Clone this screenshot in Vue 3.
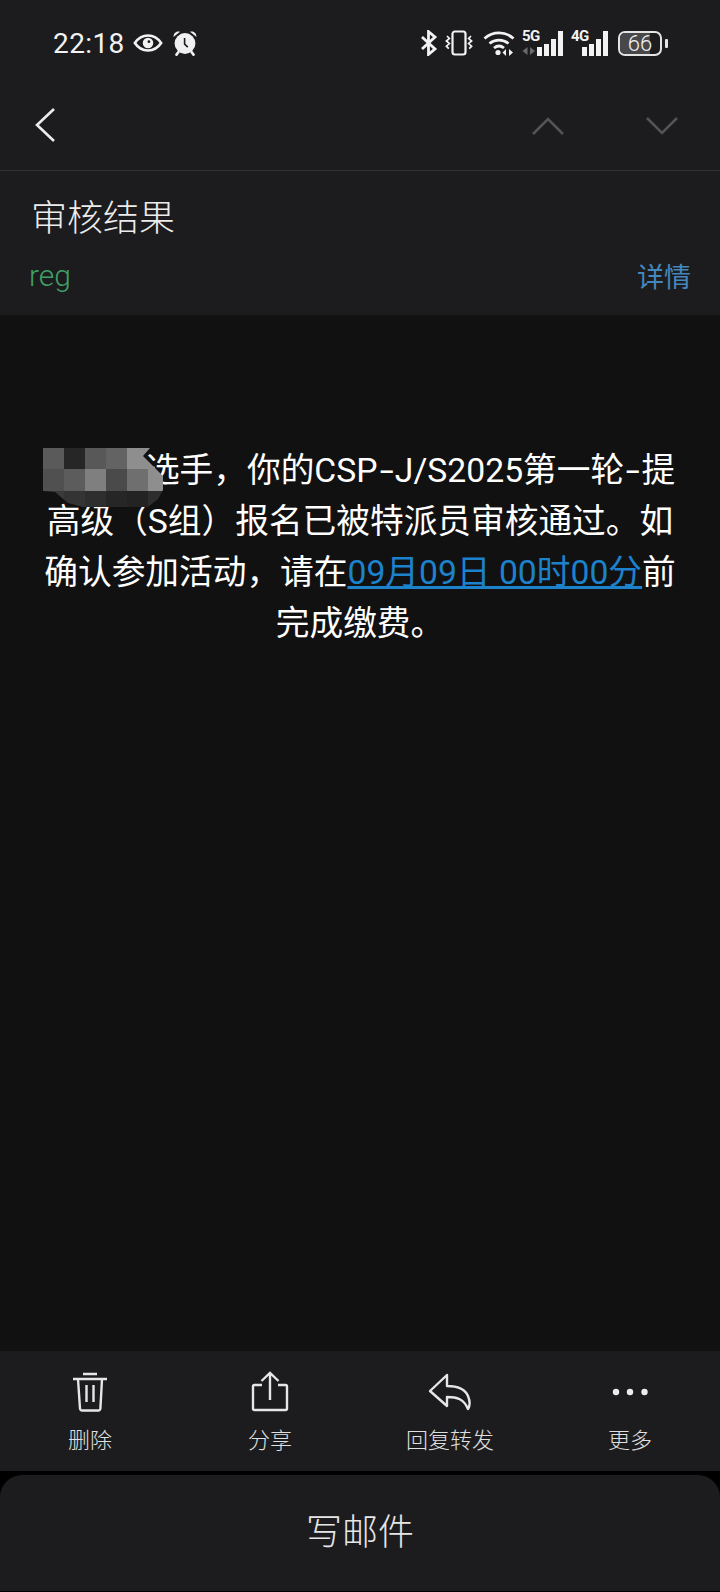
<template>
  <div class="screen">
    <header class="top">
      <div class="status">
        <div class="status-left">
          <span class="time">22:18</span>
          <svg width="30" height="20" viewBox="0 0 32 20" class="eye">
            <path d="M2 10C6 4 11 2 16 2s10 2 14 8c-4 6-9 8-14 8S6 16 2 10z" fill="none" stroke="#f2f2f2" stroke-width="2.8" />
            <circle cx="16" cy="10" r="5.6" fill="#f2f2f2" />
            <circle cx="17" cy="8.6" r="1.5" fill="#1c1c1e" />
          </svg>
          <svg width="26" height="26" viewBox="0 0 26 26" class="alarm">
            <circle cx="13" cy="13.5" r="10.4" fill="#f0f0f2" />
            <path d="M1.5 7C1.5 3 4.500 .5 8 1.800zM24.500 7c0-4-3-6.500-6.500-5.200z" fill="#f0f0f2" />
            <path d="M6.500 22l-2 2.600M19.500 22l2 2.600" stroke="#f0f0f2" stroke-width="2.600" stroke-linecap="round" />
            <path d="M12.600 8v6.200l3.200 3" fill="none" stroke="#1c1c1e" stroke-width="1.600" />
          </svg>
        </div>
        <div class="status-right">
          <svg width="18" height="26" viewBox="0 0 18 26" class="bt">
            <path d="M2 7l13 12-6.500 5.400V1.600L15 7 2 19" fill="none" stroke="#f2f2f2" stroke-width="2.800" />
          </svg>
          <svg width="30" height="26" viewBox="0 0 30 26" class="vib">
            <rect x="8.500" y="1.500" width="13" height="23" rx="2.400" fill="none" stroke="#f2f2f2" stroke-width="2.200" />
            <path d="M3 6l2.400 2.400-3 2.600 3 2.600-3 2.600 2.400 2.400M27 6l-2.400 2.400 3 2.600-3 2.600 3 2.600-2.400 2.400" fill="none" stroke="#f2f2f2" stroke-width="1.700" />
          </svg>
          <svg width="32" height="26" viewBox="0 0 32 26" class="wifi">
            <path d="M1.500 8.500C10 1 22 1 30.500 8.500M6.500 13.500c5.600-4.600 13.400-4.600 19 0M11 18c3-2.400 7-2.400 10 0" fill="none" stroke="#f2f2f2" stroke-width="2.800" />
            <circle cx="15" cy="22.500" r="2.600" fill="#f2f2f2" />
            <path d="M23 19v7l-3.500-3.500zM26 19v7l4-3.500z" fill="#f2f2f2" />
          </svg>
          <div class="signal five">
            <span class="net">5G</span>
            <svg width="14" height="8" viewBox="0 0 14 8" class="arrows">
              <path d="M5.500 0v8L.5 4zM8 0v8l5-4z" fill="#6a6a6a" />
            </svg>
            <span class="bars">
              <i class="b1"></i><i class="b2"></i><i class="b3"></i><i class="b4"></i>
            </span>
          </div>
          <div class="signal four">
            <span class="net">4G</span>
            <span class="bars">
              <i class="b1"></i><i class="b2"></i><i class="b3"></i><i class="b4"></i>
            </span>
          </div>
          <div class="battery">
            <div class="cell"><span class="fill"></span><span class="level">66</span></div>
            <span class="nub"></span>
          </div>
        </div>
      </div>
      <div class="nav">
        <svg width="24" height="38" viewBox="0 0 24 38" class="back">
          <path d="M21 3L4 19l17 16" fill="none" stroke="#ececec" stroke-width="2.600" />
        </svg>
        <div class="nav-arrows">
          <svg width="34" height="22" viewBox="0 0 34 22">
            <path d="M2 19L17 4l15 15" fill="none" stroke="#545456" stroke-width="2.600" />
          </svg>
          <svg width="34" height="22" viewBox="0 0 34 22">
            <path d="M2 3l15 15L32 3" fill="none" stroke="#545456" stroke-width="2.600" />
          </svg>
        </div>
      </div>
    </header>

    <section class="head">
      <h1 class="subject">审核结果</h1>
      <div class="meta">
        <span class="sender">reg</span>
        <span class="detail">详情</span>
      </div>
    </section>

    <main class="body">
      <p class="message">
        <span class="masked">　　　</span>选手，你的CSP<span class="dash">-</span>J/S2025第一轮<span class="dash">-</span>提高级（S组）报名已被特派员审核通过。如确认参加活动，请在<a class="deadline">09月09日 00时00分</a>前完成缴费。
      </p>
      <div class="mosaic">
        <span v-for="(c, i) in mosaic" :key="i" :style="{ background: c }"></span>
      </div>
    </main>

    <nav class="actions">
      <div class="action">
        <svg width="38" height="42" viewBox="0 0 38 42">
          <path d="M2 8h34M12 3h14M7 8l2 29.500q.2 2 2.200 2h16q2 0 2.200-2L31 8M15.500 14v17M22.500 14v17" fill="none" stroke="#e6e6e6" stroke-width="2.400" />
        </svg>
        <span>删除</span>
      </div>
      <div class="action">
        <svg width="38" height="42" viewBox="0 0 38 42">
          <path d="M11 14H3.500q-1.500 0-1.500 1.500v22q0 1.500 1.500 1.500h31q1.500 0 1.500-1.500v-22q0-1.500-1.500-1.500H27M19 29V2M10.500 10L19 2l8.500 8" fill="none" stroke="#e6e6e6" stroke-width="2.400" />
        </svg>
        <span>分享</span>
      </div>
      <div class="action">
        <svg width="44" height="42" viewBox="0 0 44 42">
          <path d="M19 4L2 20l17 15V26c10 0 17 2 21 12 2-3 2-8 0-13-3-7-11-10-21-10z" fill="none" stroke="#e6e6e6" stroke-width="2.400" stroke-linejoin="round" />
        </svg>
        <span>回复转发</span>
      </div>
      <div class="action">
        <svg width="38" height="42" viewBox="0 0 38 42">
          <circle cx="5" cy="21" r="3.200" fill="#ececec" />
          <circle cx="19" cy="21" r="3.200" fill="#ececec" />
          <circle cx="33.500" cy="21" r="3.200" fill="#ececec" />
        </svg>
        <span>更多</span>
      </div>
    </nav>

    <footer class="compose">写邮件</footer>
  </div>
</template>

<script setup>
const mosaic = [
  '#5a5a5a', '#262626', '#585858', '#636363', '#8e8e8e', '#8e8e8e',
  '#505050', '#5c5c5c', '#7f7f7f', '#4a4a4a', '#6f6f6f', '#8e8e8e',
  '#3a3a3a', '#343434', '#2e2e2e', '#262626', '#232323', '#2e2e2e'
]
</script>

<style>
html,
body {
  background: #000;
}
</style>

<style scoped>
.screen {
  width: 720px;
  height: 1592px;
  display: flex;
  flex-direction: column;
  overflow: hidden;
  background: #000;
  font-family: "Roboto", "Noto Sans CJK SC", sans-serif;
  color: #f2f2f2;
}

.top {
  height: 171px;
  flex: none;
  background: #1c1c1e;
  border-bottom: 1px solid #323234;
  box-sizing: border-box;
}

.status {
  height: 86px;
  padding: 0 52px 0 53px;
  display: flex;
  align-items: center;
  justify-content: space-between;
}

.status-left,
.status-right {
  display: flex;
  align-items: center;
}

.time {
  font-size: 28px;
  letter-spacing: 0.4px;
}

.eye {
  margin-left: 8px;
}

.alarm {
  margin-left: 9px;
}

.vib {
  margin-left: 6px;
}

.wifi {
  margin-left: 9px;
}

.signal {
  position: relative;
  width: 41px;
  height: 26px;
  margin-left: 7px;
}

.signal.four {
  width: 37px;
  margin-left: 8px;
}

.net {
  position: absolute;
  left: 0;
  top: -2px;
  font-size: 15px;
  font-weight: 700;
  line-height: 16px;
  letter-spacing: -0.5px;
}

.arrows {
  position: absolute;
  left: 0;
  bottom: 1px;
}

.bars {
  position: absolute;
  right: 0;
  bottom: 0;
  display: flex;
  align-items: flex-end;
  gap: 2px;
}

.bars i {
  display: block;
  width: 5px;
  background: #f2f2f2;
}

.b1 {
  height: 9px;
}

.b2 {
  height: 12px;
}

.b3 {
  height: 17px;
}

.b4 {
  height: 25px;
}

.battery {
  display: flex;
  align-items: center;
  margin-left: 10px;
}

.cell {
  position: relative;
  width: 44px;
  height: 25px;
  border: 2px solid #e4e4e4;
  border-radius: 7px;
  box-sizing: border-box;
  overflow: hidden;
}

.fill {
  position: absolute;
  left: 0;
  top: 0;
  bottom: 0;
  width: 75%;
  background: #48484a;
}

.level {
  position: relative;
  display: block;
  text-align: center;
  font-size: 22px;
  font-weight: 300;
  line-height: 21px;
  color: #f2f2f2;
}

.nub {
  width: 3px;
  height: 9px;
  margin-left: 3px;
  border-radius: 1px;
  background: #e4e4e4;
}

.nav {
  height: 84px;
  padding: 0 41px 0 33px;
  display: flex;
  align-items: center;
  justify-content: space-between;
}

.back {
  margin-bottom: 6px;
}

.nav-arrows {
  display: flex;
  gap: 80px;
  margin-bottom: 4px;
}

.head {
  height: 144px;
  flex: none;
  box-sizing: border-box;
  background: #1c1c1e;
  padding: 23px 29px 0 29px;
}

.subject {
  margin: 0 0 0 2px;
  font-size: 36px;
  font-weight: 300;
  line-height: 50px;
  color: #ececec;
}

.meta {
  display: flex;
  justify-content: space-between;
  align-items: flex-start;
  margin-top: 11px;
}

.sender {
  margin-top: 1px;
  font-size: 30px;
  font-weight: 300;
  line-height: 40px;
  color: #3fa066;
}

.detail {
  margin-top: 3px;
  font-size: 27px;
  font-weight: 400;
  line-height: 40px;
  color: #4487bd;
}

.body {
  position: relative;
  flex: 1;
  background: #111112;
  padding: 130px 40px 0;
}

.message {
  margin: 0;
  font-size: 33.7px;
  font-weight: 400;
  line-height: 51px;
  text-align: center;
  color: #fff;
}

.masked {
  visibility: hidden;
}

/* the mail font has a longer hyphen than Roboto */
.dash {
  display: inline-block;
  margin: 0 4px;
  transform: scaleX(1.5);
}

.deadline {
  color: #1d82cc;
  text-decoration: underline;
}

/* blurred-out name */
.mosaic {
  position: absolute;
  left: 43px;
  top: 133px;
  width: 120px;
  height: 59px;
  display: grid;
  grid-template-columns: repeat(6, 21px);
  grid-template-rows: 21px 22px 16px;
  clip-path: polygon(0 0, 107px 0, 100px 8px, 108px 16px, 120px 28px, 120px 42px, 115px 51px, 105px 59px, 40px 59px, 25px 55px, 12px 44px, 0 43px);
}

.actions {
  height: 120px;
  flex: none;
  display: grid;
  grid-template-columns: repeat(4, 180px);
  background: #1c1c1e;
}

.action {
  display: flex;
  flex-direction: column;
  align-items: center;
  padding-top: 20px;
  font-size: 22px;
  font-weight: 300;
  color: #e0e0e0;
}

.action span {
  line-height: 32px;
  margin-top: 12px;
}

.compose {
  height: 116px;
  flex: none;
  margin-top: 4px;
  margin-bottom: 1px;
  padding-bottom: 8px;
  box-sizing: border-box;
  border-radius: 22px 22px 0 0;
  background: #1c1c1e;
  display: flex;
  align-items: center;
  justify-content: center;
  font-size: 36px;
  font-weight: 300;
  color: #e6e6e6;
}
</style>
